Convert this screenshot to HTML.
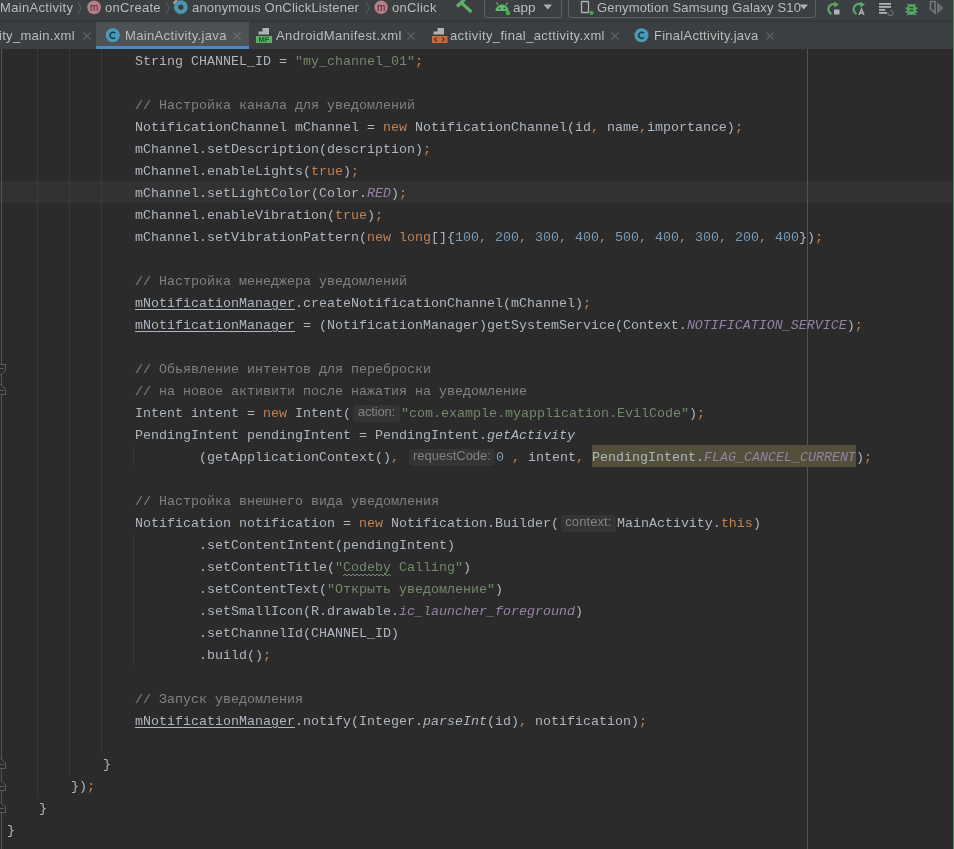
<!DOCTYPE html>
<html><head><meta charset="utf-8">
<style>
html,body{margin:0;padding:0;}
body{width:954px;height:849px;overflow:hidden;position:relative;background:#2B2B2B;font-family:"Liberation Sans",sans-serif;}
#tb{will-change:transform;position:absolute;left:0;top:0;width:954px;height:20px;background:#3C3F41;}
#sep{position:absolute;left:0;top:20px;width:954px;height:2px;background:#353739;}
#tabs{will-change:transform;position:absolute;left:0;top:22px;width:954px;height:27px;background:#3C3F41;}
.ui{position:absolute;color:#BBBBBB;font-size:13px;white-space:pre;line-height:16px;}
#ed{will-change:transform;position:absolute;left:0;top:49px;width:954px;height:800px;background:#2B2B2B;overflow:hidden;}
.ln{position:absolute;margin-top:2px;left:7px;height:22px;line-height:22px;font-family:"Liberation Mono",monospace;font-size:13.333px;color:#ADB5BF;white-space:pre;}
.k{color:#C08254}.s{color:#72896A}.n{color:#7A9AB6}.c{color:#808080}.f{color:#9680A6;font-style:italic}.i{font-style:italic}
.u{text-decoration:underline;text-underline-offset:2px}
.h{display:inline-block;position:relative;height:22px;vertical-align:top;}
.h b{position:absolute;left:2px;right:1px;top:2px;bottom:3px;background:#343434;border-radius:3px;font-weight:normal;font-family:"Liberation Sans",sans-serif;font-size:13px;letter-spacing:-0.3px;color:#828282;line-height:14px;text-align:center;}
.g{position:absolute;width:1px;background:#393939;}
.ic{position:absolute;overflow:visible}
.ui{line-height:15px}
</style></head><body>
<div id="tb">
<div class="ui" style="left:0px;top:0;letter-spacing:0.33px">MainActivity</div>
<svg class="ic" style="left:76px;top:1px" width="7" height="14"><path d="M1.5 1 L5.5 7 L1.5 13" stroke="#5E6163" stroke-width="1" fill="none"/></svg>
<svg class="ic" style="left:87px;top:0" width="15" height="15"><circle cx="7.1" cy="7.3" r="6.9" fill="#B47E8B"/><text x="7.1" y="10.6" font-family="Liberation Sans" font-size="10" fill="#5B2A22" text-anchor="middle">m</text></svg>
<div class="ui" style="left:105px;top:0;letter-spacing:0.3px">onCreate</div>
<svg class="ic" style="left:164px;top:1px" width="7" height="14"><path d="M1.5 1 L5.5 7 L1.5 13" stroke="#5E6163" stroke-width="1" fill="none"/></svg>
<svg class="ic" style="left:173px;top:0" width="16" height="15"><circle cx="7.8" cy="7.2" r="4.8" fill="none" stroke="#4D95B0" stroke-width="4.2"/><path d="M0.5 3.5 L4 0" stroke="#9EA3A6" stroke-width="2.2"/></svg>
<div class="ui" style="left:192px;top:0;letter-spacing:0.18px">anonymous OnClickListener</div>
<svg class="ic" style="left:364px;top:1px" width="7" height="14"><path d="M1.5 1 L5.5 7 L1.5 13" stroke="#5E6163" stroke-width="1" fill="none"/></svg>
<svg class="ic" style="left:374px;top:0" width="15" height="15"><circle cx="7.1" cy="7.3" r="6.7" fill="#B47E8B"/><text x="7.1" y="10.6" font-family="Liberation Sans" font-size="10" fill="#5B2A22" text-anchor="middle">m</text></svg>
<div class="ui" style="left:392px;top:0;letter-spacing:0.3px">onClick</div>
<svg class="ic" style="left:452px;top:0" width="24" height="18"><path d="M5 6.5 L12.5 -0.5" stroke="#5DAE6E" stroke-width="3.4"/><path d="M9.5 3 L19.5 12" stroke="#5DAE6E" stroke-width="3.2"/></svg>
<div style="position:absolute;left:484px;top:-4px;width:76px;height:20px;border:1px solid #5E6161;border-radius:3px"></div>
<svg class="ic" style="left:494px;top:1px" width="18" height="15"><path d="M1.5 10 A6.5 6.5 0 0 1 14.5 10 Z" fill="#5FB870"/><path d="M4 4 L2.5 1.5 M12 4 L13.5 1.5" stroke="#5FB870" stroke-width="1.2"/><circle cx="5.5" cy="7.3" r="0.9" fill="#3C3F41"/><circle cx="10.5" cy="7.3" r="0.9" fill="#3C3F41"/><circle cx="14" cy="12" r="2.3" fill="#3FAE4F"/></svg>
<div class="ui" style="left:513px;top:0;font-size:13.5px">app</div>
<svg class="ic" style="left:543px;top:4px" width="10" height="6"><path d="M0.5 0.5 L9 0.5 L4.75 5.5 Z" fill="#AFB1B3"/></svg>
<div style="position:absolute;left:568px;top:-4px;width:246px;height:20px;border:1px solid #5E6161;border-radius:3px"></div>
<svg class="ic" style="left:580px;top:0" width="14" height="16"><rect x="1.5" y="1.5" width="7" height="11" rx="0.5" fill="none" stroke="#AFB1B3" stroke-width="1.3"/><circle cx="11.5" cy="13" r="2" fill="#3FAE4F"/></svg>
<div class="ui" style="left:597px;top:0;letter-spacing:0.16px">Genymotion Samsung Galaxy S10</div>
<svg class="ic" style="left:799px;top:4px" width="10" height="6"><path d="M0.5 0.5 L9 0.5 L4.75 5.5 Z" fill="#AFB1B3"/></svg>
<svg class="ic" style="left:825px;top:1px" width="16" height="16"><path d="M10.5 3.5 A5 5 0 1 0 6.5 13" stroke="#59A869" stroke-width="2.2" fill="none"/><path d="M9 0.5 L14 3.5 L9.5 6.5 Z" fill="#59A869"/><rect x="9" y="8.5" width="5.5" height="5" fill="#AFB1B3"/></svg>
<svg class="ic" style="left:851px;top:1px" width="16" height="16"><path d="M10.5 3.5 A5 5 0 1 0 5.5 13" stroke="#59A869" stroke-width="2.2" fill="none"/><path d="M9 0.5 L14 3.5 L9.5 6.5 Z" fill="#59A869"/><path d="M8 14 L10.5 8 L13 14 M9 12 L12 12" stroke="#AFB1B3" stroke-width="1.4" fill="none"/></svg>
<svg class="ic" style="left:878px;top:1px" width="16" height="16"><rect x="1" y="2" width="12" height="1.8" fill="#AFB1B3"/><rect x="1" y="5" width="12" height="1.8" fill="#AFB1B3"/><rect x="1" y="8" width="6" height="1.8" fill="#AFB1B3"/><rect x="1" y="11" width="8" height="1.8" fill="#AFB1B3"/><path d="M10 12 A2.5 2.5 0 1 0 12.5 9.5" stroke="#6E7173" stroke-width="1.2" fill="none"/></svg>
<svg class="ic" style="left:904px;top:1px" width="16" height="16"><path d="M3.5 3 L5.5 5 M11.5 3 L9.5 5 M1.5 7 L4 7.5 M13.5 7 L11 7.5 M1.5 11 L4 10.5 M13.5 11 L11 10.5 M3 14 L5 12.5 M12 14 L10 12.5" stroke="#59A869" stroke-width="1.4"/><ellipse cx="7.5" cy="8.5" rx="4.6" ry="5.5" fill="#59A869"/><path d="M5.2 6.5 L9.8 6.5 M5.2 9.5 L9.8 9.5" stroke="#2F5A36" stroke-width="1.3"/></svg>
<svg class="ic" style="left:928px;top:0px" width="18" height="16"><path d="M2.5 1.5 L7 1.5 L7 13 L5 11 L2.5 9 Z" fill="none" stroke="#76797C" stroke-width="1.6"/><path d="M9 2 L9 14 L15.5 8 Z" fill="#6A6D70"/></svg>
</div>
<div id="sep"></div>
<div id="tabs">
<div class="ui tt" style="left:-1px;top:6px;letter-spacing:0.3px">ity_main.xml</div>
<svg class="ic" style="left:82px;top:9px" width="10" height="10"><path d="M1.5 1.5 L8.5 8.5 M8.5 1.5 L1.5 8.5" stroke="#5D6063" stroke-width="1.2"/></svg>
<div style="position:absolute;left:96px;top:0px;width:153px;height:27px;background:#4E5254;"></div>
<div style="position:absolute;left:96px;top:24px;width:153px;height:3px;background:#4A88C7;"></div>
<svg class="ic" style="left:105px;top:6px" width="16" height="16"><circle cx="7.8" cy="7.2" r="7" fill="#4B9AB6"/><path d="M10.2 5.2 A3 3 0 1 0 10.2 9.5" stroke="#173E50" stroke-width="1.5" fill="none"/></svg>
<div class="ui tt" style="left:125px;top:6px;letter-spacing:0.35px">MainActivity.java</div>
<svg class="ic" style="left:232px;top:9px" width="10" height="10"><path d="M1.5 1.5 L8.5 8.5 M8.5 1.5 L1.5 8.5" stroke="#6A6D70" stroke-width="1.2"/></svg>
<svg class="ic" style="left:255px;top:5px" width="18" height="16"><path d="M3.5 7.5 L3.5 4.5 L7.5 4.5 L7.5 1 L14 1 L14 7.5 Z" fill="#AFB1B3"/><rect x="1" y="9" width="16" height="7" fill="#5CAE68"/><text x="9" y="15.3" font-family="Liberation Sans" font-weight="bold" font-size="7.5" fill="#1E5A28" text-anchor="middle">MF</text></svg>
<div class="ui tt" style="left:276px;top:6px;letter-spacing:0.43px">AndroidManifest.xml</div>
<svg class="ic" style="left:406px;top:9px" width="10" height="10"><path d="M1.5 1.5 L8.5 8.5 M8.5 1.5 L1.5 8.5" stroke="#5D6063" stroke-width="1.2"/></svg>
<svg class="ic" style="left:431px;top:5px" width="18" height="16"><path d="M2.5 7.5 L2.5 4.5 L6.5 4.5 L6.5 1 L13 1 L13 7.5 Z" fill="#AFB1B3"/><rect x="1" y="9" width="15.5" height="7" fill="#C86A3C"/><path d="M6 10.5 L3.5 12.5 L6 14.5 M11 10.5 L13.5 12.5 L11 14.5" stroke="#6B3418" stroke-width="1.2" fill="none"/></svg>
<div class="ui tt" style="left:450px;top:6px;letter-spacing:0.38px">activity_final_acttivity.xml</div>
<svg class="ic" style="left:610px;top:9px" width="10" height="10"><path d="M1.5 1.5 L8.5 8.5 M8.5 1.5 L1.5 8.5" stroke="#5D6063" stroke-width="1.2"/></svg>
<svg class="ic" style="left:634px;top:6px" width="16" height="16"><circle cx="7.5" cy="7.2" r="7" fill="#4B9AB6"/><path d="M9.9 5.2 A3 3 0 1 0 9.9 9.5" stroke="#173E50" stroke-width="1.5" fill="none"/></svg>
<div class="ui tt" style="left:654px;top:6px;letter-spacing:0.27px">FinalActtivity.java</div>
<svg class="ic" style="left:765px;top:9px" width="10" height="10"><path d="M1.5 1.5 L8.5 8.5 M8.5 1.5 L1.5 8.5" stroke="#5D6063" stroke-width="1.2"/></svg>
</div>
<div style="position:absolute;left:953px;top:0;width:1px;height:849px;background:#4D8757;z-index:5"></div>
<div id="ed">
<div style="position:absolute;left:0;top:132px;width:954px;height:22px;background:#323232"></div>
<div class="g" style="left:807px;top:0;height:800px;background:#525252"></div>
<div class="g" style="left:1px;top:0;height:800px;width:1px;background:#555555"></div>
<div class="g" style="left:37px;top:0;height:748px"></div>
<div class="g" style="left:69px;top:0;height:726px"></div>
<div class="g" style="left:101px;top:0;height:704px"></div>
<div class="g" style="left:133px;top:396px;height:22px"></div>
<div class="g" style="left:133px;top:484px;height:132px"></div>
<svg style="position:absolute;left:0;top:0" width="10" height="800">
<g fill="#2B2B2B" stroke="#5A5A5A" stroke-width="1">
<path d="M-4.5 315.5 L5.5 315.5 L5.5 321.5 L0.5 326 L-4.5 321.5 Z"/><path d="M-3 319.5 L4 319.5" stroke-width="1"/>
<path d="M-4.5 345.5 L5.5 345.5 L5.5 340 L0.5 335.5 L-4.5 340 Z"/><path d="M-3 341.5 L4 341.5"/>
<path d="M-4.5 719.5 L5.5 719.5 L5.5 714 L0.5 709 L-4.5 714 Z"/><path d="M-3 715.5 L4 715.5"/>
<path d="M-4.5 741.5 L5.5 741.5 L5.5 736 L0.5 731 L-4.5 736 Z"/><path d="M-3 737.5 L4 737.5"/>
<path d="M-4.5 763.5 L5.5 763.5 L5.5 758 L0.5 753 L-4.5 758 Z"/><path d="M-3 759.5 L4 759.5"/>
</g></svg>
<div style="position:absolute;left:592px;top:396px;width:264px;height:22px;background:#52503A"></div>
<svg style="position:absolute;left:343px;top:524px" width="50" height="4"><path d="M0 3 L2 1 L4 3 L6 1 L8 3 L10 1 L12 3 L14 1 L16 3 L18 1 L20 3 L22 1 L24 3 L26 1 L28 3 L30 1 L32 3 L34 1 L36 3 L38 1 L40 3 L42 1 L44 3 L46 1 L48 3" stroke="#7A8A74" stroke-width="1" fill="none"/></svg>

<div class="ln" style="top:0px">                String CHANNEL_ID = <span class="s">"my_channel_01"</span><span class="k">;</span></div>
<div class="ln" style="top:44px">                <span class="c">// Настройка канала для уведомлений</span></div>
<div class="ln" style="top:66px">                NotificationChannel mChannel = <span class="k">new </span>NotificationChannel(id<span class="k">, </span>name<span class="k">,</span>importance)<span class="k">;</span></div>
<div class="ln" style="top:88px">                mChannel.setDescription(description)<span class="k">;</span></div>
<div class="ln" style="top:110px">                mChannel.enableLights(<span class="k">true</span>)<span class="k">;</span></div>
<div class="ln" style="top:132px">                mChannel.setLightColor(Color.<span class="f">RED</span>)<span class="k">;</span></div>
<div class="ln" style="top:154px">                mChannel.enableVibration(<span class="k">true</span>)<span class="k">;</span></div>
<div class="ln" style="top:176px">                mChannel.setVibrationPattern(<span class="k">new long</span>[]{<span class="n">100</span><span class="k">, </span><span class="n">200</span><span class="k">, </span><span class="n">300</span><span class="k">, </span><span class="n">400</span><span class="k">, </span><span class="n">500</span><span class="k">, </span><span class="n">400</span><span class="k">, </span><span class="n">300</span><span class="k">, </span><span class="n">200</span><span class="k">, </span><span class="n">400</span>})<span class="k">;</span></div>
<div class="ln" style="top:220px">                <span class="c">// Настройка менеджера уведомлений</span></div>
<div class="ln" style="top:242px">                <span class="u">mNotificationManager</span>.createNotificationChannel(mChannel)<span class="k">;</span></div>
<div class="ln" style="top:264px">                <span class="u">mNotificationManager</span> = (NotificationManager)getSystemService(Context.<span class="f">NOTIFICATION_SERVICE</span>)<span class="k">;</span></div>
<div class="ln" style="top:308px">                <span class="c">// Обьявление интентов для переброски</span></div>
<div class="ln" style="top:330px">                <span class="c">// на новое активити после нажатия на уведомление</span></div>
<div class="ln" style="top:352px">                Intent intent = <span class="k">new </span>Intent(<span class="h" style="width:50px"><b style="letter-spacing:-0.15px">action:</b></span><span class="s">"com.example.myapplication.EvilCode"</span>)<span class="k">;</span></div>
<div class="ln" style="top:374px">                PendingIntent pendingIntent = PendingIntent.<span class="i">getActivity</span></div>
<div class="ln" style="top:396px">                        (getApplicationContext()<span class="k">, </span><span class="h" style="width:89px"><b style="letter-spacing:0px">requestCode:</b></span><span class="n">0</span> <span class="k">, </span>intent<span class="k">, </span>PendingIntent.<span class="f">FLAG_CANCEL_CURRENT</span>)<span class="k">;</span></div>
<div class="ln" style="top:440px">                <span class="c">// Настройка внешнего вида уведомления</span></div>
<div class="ln" style="top:462px">                Notification notification = <span class="k">new </span>Notification.Builder(<span class="h" style="width:58px"><b style="letter-spacing:0.1px">context:</b></span>MainActivity.<span class="k">this</span>)</div>
<div class="ln" style="top:484px">                        .setContentIntent(pendingIntent)</div>
<div class="ln" style="top:506px">                        .setContentTitle(<span class="s">"Codeby Calling"</span>)</div>
<div class="ln" style="top:528px">                        .setContentText(<span class="s">"Открыть уведомление"</span>)</div>
<div class="ln" style="top:550px">                        .setSmallIcon(R.drawable.<span class="f">ic_launcher_foreground</span>)</div>
<div class="ln" style="top:572px">                        .setChannelId(CHANNEL_ID)</div>
<div class="ln" style="top:594px">                        .build()<span class="k">;</span></div>
<div class="ln" style="top:638px">                <span class="c">// Запуск уведомления</span></div>
<div class="ln" style="top:660px">                <span class="u">mNotificationManager</span>.notify(Integer.<span class="i">parseInt</span>(id)<span class="k">, </span>notification)<span class="k">;</span></div>
<div class="ln" style="top:703px">            }</div>
<div class="ln" style="top:725px">        })<span class="k">;</span></div>
<div class="ln" style="top:747px">    }</div>
<div class="ln" style="top:769px">}</div>
</div>
</body></html>
